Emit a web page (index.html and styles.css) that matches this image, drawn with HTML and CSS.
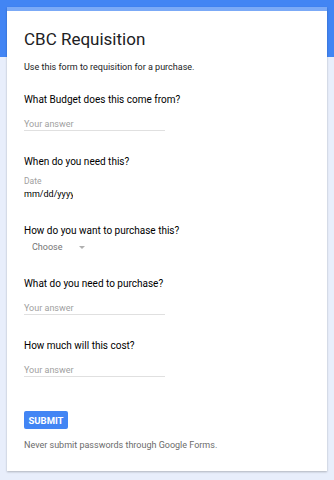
FILE: index.html
```html
<!DOCTYPE html>
<html lang="en">
<head>
    <meta charset="UTF-8">
    <meta name="viewport" content="width=device-width, initial-scale=1.0">
    <title>CBC Requisition</title>
    <link rel="stylesheet" href="styles.css">
</head>
<body>

    <!-- Blue header band -->
    <div class="header-band"></div>

    <div class="form-card">
        <!-- Title and description -->
        <h1 class="form-title">CBC Requisition</h1>
        <p class="form-desc">Use this form to requisition for a purchase.</p>

        <!-- Questions -->
        <div class="question">
            <div class="question-title">What Budget does this come from?</div>
            <div class="answer-line">Your answer</div>
        </div>

        <div class="question">
            <div class="question-title">When do you need this?</div>
            <div class="date-label">Date</div>
            <div class="date-value">mm/dd/yyyy</div>
        </div>

        <div class="question question-select">
            <div class="question-title">How do you want to purchase this?</div>
            <div class="select-box">
                <span>Choose</span>
                <span class="select-arrow"></span>
            </div>
        </div>

        <div class="question">
            <div class="question-title">What do you need to purchase?</div>
            <div class="answer-line">Your answer</div>
        </div>

        <div class="question">
            <div class="question-title">How much will this cost?</div>
            <div class="answer-line">Your answer</div>
        </div>

        <!-- Submit -->
        <button class="submit-button">SUBMIT</button>
        <p class="footer-note">Never submit passwords through Google Forms.</p>
    </div>

</body>
</html>
```

FILE: styles.css
```css
body {
    margin: 0;
    padding: 7px 7px 0 7px;
    background-color: #e8eefb; /* Light blue page */
    font-family: Roboto, "Liberation Sans", sans-serif;
    color: #202124;
    position: relative;
    height: 480px;
    box-sizing: border-box;
    overflow: hidden;
}

.header-band {
    position: absolute;
    top: 0;
    left: 0;
    right: 0;
    height: 57px;
    background-color: #4285f4; /* Google blue */
}

.form-card {
    position: relative;
    background-color: #ffffff;
    border-top: 4px solid #7baaf7;
    box-shadow: 0 1px 2px rgba(0, 0, 0, 0.25);
    padding: 16px 17px;
    height: 464px;
    box-sizing: border-box;
}

.form-title {
    font-size: 17px;
    font-weight: 400;
    margin: 0 0 10px 0;
    line-height: 24px;
}

.form-desc {
    font-size: 9px;
    margin: 0 0 20px 0;
    line-height: 12px;
}

.question {
    margin-bottom: 24px;
}

.question-title {
    font-size: 10px;
    line-height: 14px;
    color: #000000;
    margin-bottom: 11px;
}

.answer-line {
    width: 141px;
    border-bottom: 1px solid #e0e0e0;
    font-size: 9px;
    line-height: 12px;
    color: #a0a0a0;
}

.date-label {
    font-size: 8.5px;
    color: #a0a0a0;
    line-height: 12px;
    margin-top: -5px;
    margin-bottom: 1px;
}

.date-value {
    font-size: 9px;
    line-height: 12px;
    color: #000000;
    width: 49px;
    overflow: hidden;
    white-space: nowrap;
}

.question-select .question-title {
    margin-bottom: 3px;
}

.select-box {
    display: flex;
    align-items: center;
    gap: 16px;
    padding-left: 8px;
    font-size: 9px;
    line-height: 12px;
    color: #757575;
}

.select-arrow {
    width: 0;
    height: 0;
    border-left: 3px solid transparent;
    border-right: 3px solid transparent;
    border-top: 3px solid #b0b0b0;
}

.submit-button {
    display: block;
    margin-top: 34px;
    background-color: #4285f4;
    border: none;
    border-radius: 2px;
    color: #ffffff;
    font-family: Roboto, "Liberation Sans", sans-serif;
    font-weight: 700;
    font-size: 9.5px;
    width: 44px;
    height: 18px;
    padding: 0;
}

.footer-note {
    font-size: 9px;
    color: #6b6b6b;
    margin: 10px 0 0 0;
    line-height: 12px;
}
```
